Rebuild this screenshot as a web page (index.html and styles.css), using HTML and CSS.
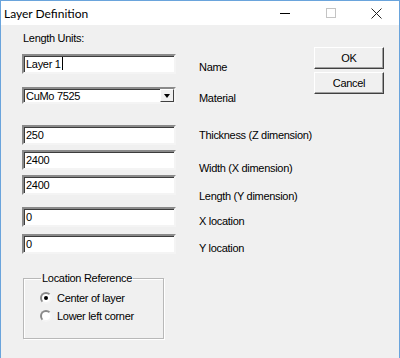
FILE: index.html
```html
<!DOCTYPE html>
<html lang="en">
<head>
    <meta charset="UTF-8">
    <title>Layer Definition</title>
    <link rel="stylesheet" href="styles.css">
</head>
<body>
    <div class="window">
        <div class="titlebar">
            <div class="title">Layer Definition</div>
            <div class="caption-btn">
                <svg width="10" height="10" viewBox="0 0 10 10"><path d="M0 5.5h10" stroke="#000" stroke-width="1"/></svg>
            </div>
            <div class="caption-btn">
                <svg width="10" height="10" viewBox="0 0 10 10"><rect x="0.5" y="0.5" width="9" height="9" fill="none" stroke="#c4c4c4"/></svg>
            </div>
            <div class="caption-btn">
                <svg width="11" height="11" viewBox="0 0 11 11"><path d="M0.5 0.5l10 10M10.5 0.5l-10 10" stroke="#222" stroke-width="1"/></svg>
            </div>
        </div>

        <div class="client">
            <div class="main">
                <div class="units-label">Length Units:</div>

                <div class="form">
                    <div class="fields">
                        <div class="field name-field">Layer 1<span class="caret"></span></div>
                        <div class="combo">
                            <span>CuMo 7525</span>
                            <span class="combo-btn"><span class="arrow"></span></span>
                        </div>
                        <div class="field thickness-field">250</div>
                        <div class="field tight">2400</div>
                        <div class="field tight">2400</div>
                        <div class="field xloc-field">0</div>
                        <div class="field yloc-field">0</div>
                    </div>
                    <div class="labels">
                        <div class="lbl lbl-name">Name</div>
                        <div class="lbl lbl-material">Material</div>
                        <div class="lbl lbl-thick">Thickness (Z dimension)</div>
                        <div class="lbl lbl-width">Width (X dimension)</div>
                        <div class="lbl lbl-length">Length (Y dimension)</div>
                        <div class="lbl lbl-x">X location</div>
                        <div class="lbl lbl-y">Y location</div>
                    </div>
                </div>

                <fieldset class="group">
                    <legend>Location Reference</legend>
                    <div class="radio-row"><span class="radio checked"></span>Center of layer</div>
                    <div class="radio-row"><span class="radio"></span>Lower left corner</div>
                </fieldset>
            </div>

            <div class="actions">
                <button class="btn">OK</button>
                <button class="btn">Cancel</button>
            </div>
        </div>
    </div>
</body>
</html>
```

FILE: styles.css
```css
body {
    margin: 0;
    background: #f0f0f0;
}
.window {
    width: 398px;
    height: 357px;
    border: 1px solid #6aa4dc;
    border-bottom: none;
    background: #f0f0f0;
    display: flex;
    flex-direction: column;
}
.titlebar {
    height: 24px;
    background: #fff;
    display: flex;
    align-items: center;
}
.title {
    flex: 1;
    padding-left: 3px;
    font-family: Lato, "Liberation Sans", sans-serif;
    font-size: 12px;
    color: #000;
}
.caption-btn {
    width: 46px;
    height: 24px;
    display: flex;
    justify-content: center;
    align-items: center;
}
.caption-btn:last-child {
    width: 45px;
}
.client {
    flex: 1;
    display: flex;
    padding: 7px 15px 0 21px;
    font-family: "Liberation Sans", Arial, sans-serif;
    font-size: 11px;
    letter-spacing: -0.3px;
    color: #000;
}
.main {
    display: flex;
    flex-direction: column;
}
.units-label {
    padding-left: 1px;
    line-height: 13px;
}
.form {
    display: flex;
    gap: 23px;
}
.fields {
    width: 154px;
    flex-shrink: 0;
    display: flex;
    flex-direction: column;
}
.field {
    height: 16px;
    line-height: 16px;
    padding: 0 2px;
    background: #fff;
    border: 2px solid;
    border-color: #8a8a8a #f4f4f4 #f4f4f4 #8a8a8a;
    box-shadow: inset 1px 1px 0 #3c3c3c;
    white-space: nowrap;
}
.name-field {
    margin-top: 9px;
}
.caret {
    display: inline-block;
    width: 1px;
    height: 13px;
    background: #000;
    vertical-align: -2px;
    margin-left: 1px;
}
.combo {
    margin-top: 13px;
    height: 13px;
    background: #fff;
    border: 2px solid;
    border-color: #8a8a8a #f4f4f4 #f4f4f4 #8a8a8a;
    box-shadow: inset 1px 1px 0 #3c3c3c;
    display: flex;
    align-items: center;
    justify-content: space-between;
    padding-left: 2px;
}
.combo-btn {
    width: 14px;
    height: 13px;
    box-sizing: border-box;
    background: #f0f0f0;
    border: 1px solid;
    border-color: #fff #404040 #404040 #fff;
    display: flex;
    justify-content: center;
    align-items: center;
}
.arrow {
    width: 0;
    height: 0;
    border-left: 3.5px solid transparent;
    border-right: 3.5px solid transparent;
    border-top: 4px solid #000;
}
.thickness-field {
    margin-top: 21px;
}
.tight {
    margin-top: 5px;
}
.xloc-field {
    margin-top: 12px;
}
.yloc-field {
    margin-top: 7px;
}
.labels {
    display: flex;
    flex-direction: column;
    line-height: 14px;
    white-space: nowrap;
}
.lbl-name { margin-top: 15px; }
.lbl-material { margin-top: 17px; }
.lbl-thick { margin-top: 23px; }
.lbl-width { margin-top: 19px; }
.lbl-length { margin-top: 14px; }
.lbl-x { margin-top: 11px; }
.lbl-y { margin-top: 13px; }
.group {
    margin: 17px 0 0 1px;
    width: 116px;
    height: 61px;
    padding: 4px 7px 0 16px;
    border: 1px solid #b8b8b8;
    box-shadow: 1px 1px 0 #fff, inset 1px 1px 0 #fff;
}
.group legend {
    padding: 0 1px;
    margin-left: 1px;
    line-height: 13px;
}
.radio-row {
    display: flex;
    align-items: center;
    height: 18px;
}
.radio {
    width: 8px;
    height: 8px;
    border-radius: 50%;
    background: #fff;
    border: 2px solid;
    border-color: #8a8a8a #f4f4f4 #f4f4f4 #8a8a8a;
    margin-right: 5px;
    display: flex;
    justify-content: center;
    align-items: center;
}
.radio.checked::after {
    content: "";
    width: 4px;
    height: 4px;
    border-radius: 50%;
    background: #000;
}
.actions {
    margin-left: auto;
    padding-top: 15px;
    display: flex;
    flex-direction: column;
    gap: 3px;
}
.btn {
    width: 70px;
    height: 22px;
    padding: 0;
    font-family: "Liberation Sans", Arial, sans-serif;
    font-size: 11px;
    letter-spacing: -0.3px;
    color: #000;
    background: #f0f0f0;
    border: 1px solid;
    border-color: #fff #404040 #404040 #fff;
    box-shadow: inset -1px -1px 0 #a0a0a0;
}
```
